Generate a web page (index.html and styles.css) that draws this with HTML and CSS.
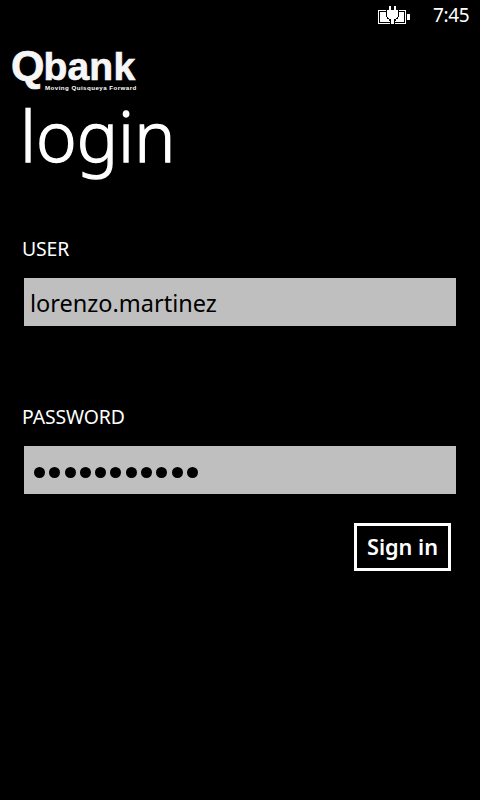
FILE: index.html
```html
<!DOCTYPE html>
<html lang="en">
<head>
<meta charset="utf-8">
<title>Qbank login</title>
<link rel="stylesheet" href="styles.css">
</head>
<body>
<header class="status">
  <svg class="battery" width="34" height="22" viewBox="0 0 34 22" shape-rendering="crispEdges">
    <path fill="#fff" d="M1 5h28v14H1zM30 9h3v6h-3z"/>
    <path fill="#000" d="M2 6h26v12H2z"/>
    <path fill="#fff" d="M3 7h24v10H3z"/>
    <path fill="#000" d="M9 5h13v7h-1v2h-2v2h-1v3h-5v-3h-1v-2h-2v-2H9z"/>
    <path fill="#fff" d="M12 1h2v4h3V1h2v4h2v7h-1v1h-1v1h-2v5h-3v-5h-2v-1h-1v-1h-1V5h2z"/>
  </svg>
  <span class="clock">7:45</span>
</header>
<main>
  <div class="logo"><div class="brand"><span class="initial">Q</span>bank</div><div class="tagline">Moving Quisqueya Forward</div></div>
  <h1>login</h1>
  <form>
    <label for="user">USER</label>
    <input id="user" class="field" type="text" value="lorenzo.martinez">
    <label class="second">PASSWORD</label>
    <div class="field dots"><i></i><i></i><i></i><i></i><i></i><i></i><i></i><i></i><i></i><i></i><i></i></div>
    <button type="button"><span>Sign in</span></button>
  </form>
</main>
</body>
</html>
```
FILE: styles.css
```css
* { box-sizing: border-box; }
body { margin: 0; width: 480px; height: 800px; overflow: hidden; background: #000; color: #fff; font-family: "Noto Sans", sans-serif; }
.status { display: flex; justify-content: flex-end; height: 32px; padding: 5px 10px 0 0; }
.battery { margin-right: 22px; }
.clock { width: 37px; font-size: 19px; line-height: 20px; letter-spacing: -0.4px; white-space: nowrap; }
.logo { height: 66px; padding: 11px 0 0 11px; font-family: "Liberation Sans", sans-serif; font-weight: bold; }
.brand { height: 41px; font-size: 39px; line-height: 45px; letter-spacing: 0.2px; color: #f7f6f7; -webkit-text-stroke: 0.7px #f7f6f7; white-space: nowrap; }
.initial { font-size: 43px; letter-spacing: -1px; }
.tagline { margin-left: 34px; font-size: 6.2px; line-height: 7px; letter-spacing: 0.44px; white-space: nowrap; }
h1 { margin: 0 0 0 20px; height: 138px; font-size: 69px; line-height: 74px; font-weight: 300; letter-spacing: 0; -webkit-text-stroke: 1.3px #fff; }
form { padding: 0 24px; display: flex; flex-direction: column; }
label { height: 42px; margin-left: -2px; font-size: 19.4px; line-height: 26px; letter-spacing: -0.1px; }
.second { margin-top: 78px; }
.field { width: 432px; height: 48px; border: 0; border-radius: 0; background: #bfbfbf; color: #000; padding: 2px 6px 0; outline: 0; font: 23.5px "Noto Sans", sans-serif; }
.dots { display: flex; align-items: center; gap: 4.3px; padding: 5px 0 0 10px; }
.dots i { width: 11px; height: 11px; border-radius: 50%; background: #000; flex: none; }
button { align-self: flex-end; margin: 29px 5px 0 0; width: 97px; height: 48px; padding: 0; border: 3px solid #fff; background: #000; color: #fff; font: 600 21.7px/40px "Noto Sans", sans-serif; white-space: nowrap; }
```
